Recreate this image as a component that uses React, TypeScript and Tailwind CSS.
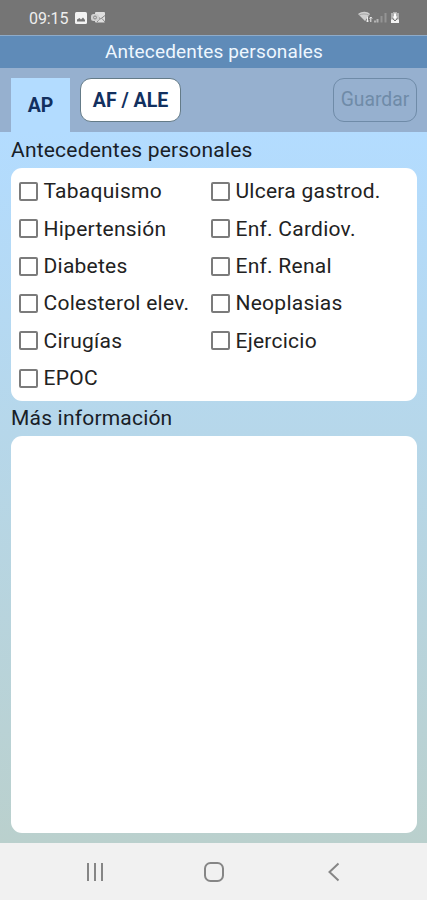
const leftItems = ["Tabaquismo", "Hipertensión", "Diabetes", "Colesterol elev.", "Cirugías", "EPOC"];
const rightItems = ["Ulcera gastrod.", "Enf. Cardiov.", "Enf. Renal", "Neoplasias", "Ejercicio"];

const CheckItem = ({ label }: { label: string }) => {
  return (
    <label className="flex h-[37.3px] items-center">
      <input type="checkbox" className="size-[19px] shrink-0 appearance-none rounded-[2px] border-2 border-[#7b7b7b] bg-white checked:bg-[#5f8bb8]" />
      <span className="ml-1.5 whitespace-nowrap pt-px text-[21px] tracking-[0.25px] text-[#222]">{label}</span>
    </label>
  );
};

const StatusBar = () => {
  return (
    <div className="flex h-[35px] shrink-0 items-center bg-[#757575] pl-[29px] pr-[27px] text-[#eee]">
      <span className="pt-[2px] text-[16px] leading-none tracking-[-0.1px]">09:15</span>
      <svg className="ml-[7px]" width="12" height="12" viewBox="0 0 12 12">
        <rect width="12" height="12" rx="1.5" fill="#f2f2f2" />
        <path d="M2 9.5V7.5L4.5 6 6 7.5 8 5.6 10 8V9.5Z" fill="#757575" />
      </svg>
      <svg className="ml-1" width="15" height="13" viewBox="0 0 15 13">
        <rect x="4" y="1" width="10" height="10.5" rx="1" fill="#dedede" />
        <path d="M6 4.5 9.5 8 14 4.5M6 11 9 7.5M14 11 11 7.5" stroke="#858585" fill="none" />
        <rect y="3" width="8" height="7" rx="2.5" fill="#d0d0d0" />
        <circle cx="4" cy="6.5" r="1.5" stroke="#888" fill="none" />
      </svg>
      <svg className="ml-auto" width="43" height="15" viewBox="0 0 43 15">
        <path d="M1 4C5 1 10 1 13 4L8 11Z" fill="#cfcfcf" />
        <path d="M2 5.2C5 3.5 9 3.5 12 5.2" stroke="#999" strokeWidth=".8" fill="none" />
        <path d="M10.5 7v5m-1.3-1.5 1.3 1.5 1.3-1.5M13.8 12v-5m-1.3 1.5 1.3-1.5 1.3 1.5" stroke="#eee" fill="none" />
        <path d="M18 12.5v-2M20.5 12.5V9" stroke="#b5b5b5" strokeWidth="2" />
        <path d="M24.5 12.5V6M28.5 12.5V3" stroke="#949494" strokeWidth="2" />
        <path d="M36 2h4v1h2v10h-8V3h2z" fill="#b0b0b0" />
        <path d="M34 9.5h8V13h-8z" fill="#f2f2f2" />
        <path d="M38 3.5v4" stroke="#fff" strokeWidth="2" />
        <path d="m35.5 6.5 2.5 3 2.5-3z" fill="#fff" />
        <path d="m35.5 8.5 2.5 2.5 2.5-2.5" stroke="#777" fill="none" />
      </svg>
    </div>
  );
};

const NavBar = () => {
  return (
    <nav className="grid h-[57px] shrink-0 grid-cols-3 items-center bg-[#f1f1f1] pl-[35px] pr-[33px] text-[#868686]">
      <svg className="justify-self-center" width="20" height="20" viewBox="0 0 20 20" fill="none" stroke="currentColor" strokeWidth="2">
        <path d="M3 1v18M10 1v18M17 1v18" />
      </svg>
      <svg className="justify-self-center" width="20" height="20" viewBox="0 0 20 20" fill="none" stroke="currentColor" strokeWidth="2">
        <rect x="1" y="1" width="18" height="18" rx="5.5" />
      </svg>
      <svg className="justify-self-center" width="20" height="20" viewBox="0 0 20 20" fill="none" stroke="currentColor" strokeWidth="2">
        <path d="M14.5 1.5 5.5 10l9 8.5" />
      </svg>
    </nav>
  );
};

export default function App() {
  return (
    <div className="flex h-[900px] w-[427px] flex-col overflow-hidden font-[Roboto,sans-serif]">
      <StatusBar />
      <header className="flex h-[33px] shrink-0 items-center justify-center border-t border-[#8eabc9] bg-[#5f8bb8] pl-px text-[19px] tracking-[0.15px] text-[#eef7ff]">
        Antecedentes personales
      </header>
      <div className="flex h-16 shrink-0 items-start bg-[#96b0cf] px-[11px]">
        <button className="mt-[10px] h-[54px] w-[59px] bg-[#b3dcff] pt-[2px] text-[19.5px] font-bold text-[#12305f]">AP</button>
        <button className="ml-[10px] mt-[10px] h-[44px] w-[101px] rounded-[11px] border border-[#647b88] bg-white pt-px text-[19.5px] font-bold text-[#12305f]">
          AF / ALE
        </button>
        <button disabled className="-mr-px ml-auto mt-[10px] h-[44px] w-[84px] rounded-[11px] border border-[#6f8ba8] pt-px text-[19.3px] text-[#6f8ba8]">
          Guardar
        </button>
      </div>
      <main className="flex min-h-0 flex-1 flex-col bg-linear-to-b from-[#b3dcff] to-[#bad0cd] pb-[10px] pl-[11px] pr-[10px]">
        <h2 className="flex h-9 shrink-0 items-center pt-[2px] text-[21px] tracking-[0.2px] text-[#182027]">Antecedentes personales</h2>
        <section className="grid h-[233px] shrink-0 grid-cols-[192px_1fr] rounded-[11px] bg-white pl-[7.5px] pt-[5px]">
          <div>
            {leftItems.map((item) => (
              <CheckItem key={item} label={item} />
            ))}
          </div>
          <div>
            {rightItems.map((item) => (
              <CheckItem key={item} label={item} />
            ))}
          </div>
        </section>
        <h2 className="flex h-[35px] shrink-0 items-center pt-px text-[21px] tracking-[0.2px] text-[#182027]">Más información</h2>
        <textarea aria-label="Más información" className="min-h-0 flex-1 resize-none rounded-[11px] bg-white p-2 text-[21px] outline-none" />
      </main>
      <NavBar />
    </div>
  );
}
